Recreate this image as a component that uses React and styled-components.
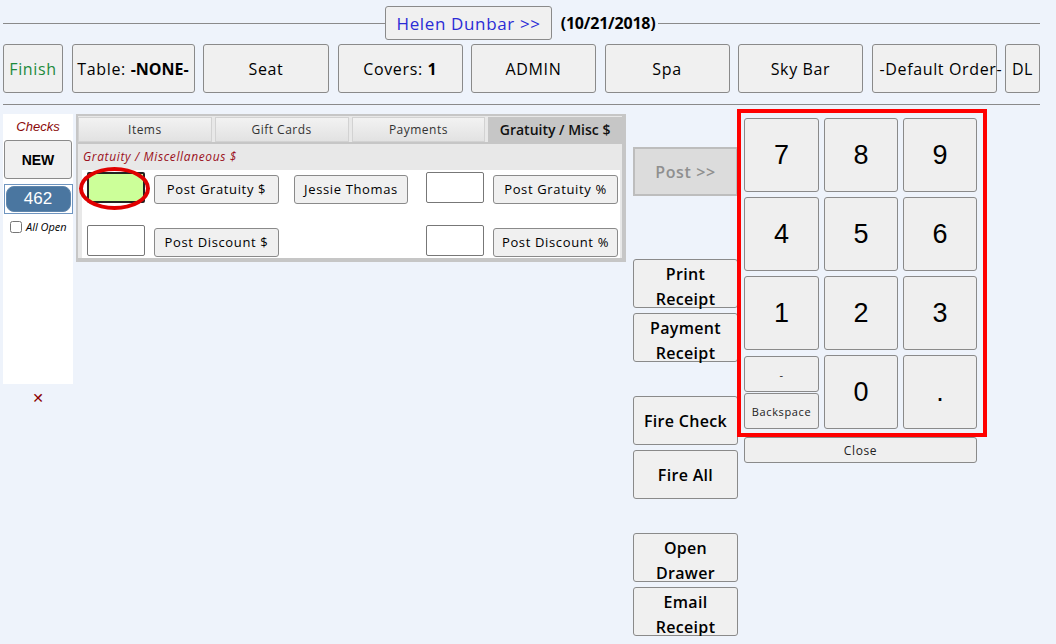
import styled, { createGlobalStyle } from "styled-components";

const Global = createGlobalStyle`
  body {
    margin: 0;
    background: #eef3fb;
    font-family: "Open Sans", "Liberation Sans", sans-serif;
    letter-spacing: 0.04em;
    color: #000;
  }
`;

const topButtons = [
  { key: "admin", label: "ADMIN" },
  { key: "spa", label: "Spa" },
  { key: "sky", label: "Sky Bar" },
  { key: "order", label: "-Default Order-" },
];

const tabs = ["Items", "Gift Cards", "Payments", "Gratuity / Misc $"];

const keys = ["7", "8", "9", "4", "5", "6", "1", "2", "3"];

const App = () => {
  return (
    <>
      <Global />
      <Page>
        <Header>
          <Rule />
          <NameButton>Helen Dunbar &gt;&gt;</NameButton>
          <DateText>(10/21/2018)</DateText>
          <Rule />
        </Header>

        <Toolbar>
          <TopButton $w={60} $color="#1d8a3c">Finish</TopButton>
          <TopButton $w={123}>
            Table: <b>-NONE-</b>
          </TopButton>
          <TopButton $w={126}>Seat</TopButton>
          <TopButton $w={125}>
            Covers: <b>1</b>
          </TopButton>
          {topButtons.map((b) => (
            <TopButton key={b.key} $w={125} $left={b.key === "order"}>
              {b.label}
            </TopButton>
          ))}
          <TopButton $w={35}>DL</TopButton>
        </Toolbar>

        <Divider />

        <Main>
          <ChecksColumn>
            <ChecksPanel>
              <ChecksTitle>Checks</ChecksTitle>
              <NewButton>NEW</NewButton>
              <CheckSlot>
                <CheckButton>462</CheckButton>
              </CheckSlot>
              <AllOpen>
                <input type="checkbox" />
                <span>All Open</span>
              </AllOpen>
            </ChecksPanel>
            <CloseMark>✕</CloseMark>
          </ChecksColumn>

          <TabPanel>
            <TabBar>
              {tabs.map((t, i) => (
                <Tab key={t} $active={i === 3}>
                  {t}
                </Tab>
              ))}
            </TabBar>
            <TabBody>
              <SectionLabel>Gratuity / Miscellaneous $</SectionLabel>
              <FormArea>
                <FormRow>
                  <InputWrap>
                    <AmountInput $highlight />
                    <Ring />
                  </InputWrap>
                  <SmallButton $w={125}>Post Gratuity $</SmallButton>
                  <SmallButton $w={114} $ml={7}>Jessie Thomas</SmallButton>
                  <Spacer />
                  <AmountInput />
                  <SmallButton $w={125}>Post Gratuity %</SmallButton>
                </FormRow>
                <FormRow>
                  <AmountInput />
                  <SmallButton $w={125}>Post Discount $</SmallButton>
                  <Spacer />
                  <AmountInput />
                  <SmallButton $w={125}>Post Discount %</SmallButton>
                </FormRow>
              </FormArea>
            </TabBody>
          </TabPanel>

          <ActionColumn>
            <PostButton>Post &gt;&gt;</PostButton>
            <ActionButton $mt={63}>
              Print
              <br />
              Receipt
            </ActionButton>
            <ActionButton $mt={5}>
              Payment
              <br />
              Receipt
            </ActionButton>
            <ActionButton $mt={34}>Fire Check</ActionButton>
            <ActionButton $mt={5}>Fire All</ActionButton>
            <ActionButton $mt={34}>
              Open
              <br />
              Drawer
            </ActionButton>
            <ActionButton $mt={5}>
              Email
              <br />
              Receipt
            </ActionButton>
          </ActionColumn>

          <Numpad>
            <KeyGrid>
              {keys.map((k) => (
                <Key key={k}>{k}</Key>
              ))}
              <SplitCell>
                <HalfKey>-</HalfKey>
                <HalfKey>Backspace</HalfKey>
              </SplitCell>
              <Key>0</Key>
              <Key>.</Key>
              <Highlight />
            </KeyGrid>
            <CloseButton>Close</CloseButton>
          </Numpad>
        </Main>
      </Page>
    </>
  );
};

const Page = styled.div`
  padding: 6px 16px 0 3px;
`;

const Header = styled.div`
  display: flex;
  align-items: center;
  height: 34px;
`;

const Rule = styled.div`
  flex: 1;
  border-top: 1px solid #8a8a8a;
`;

const NameButton = styled.button`
  height: 34px;
  padding: 0 10px;
  background: #f0f0f0;
  border: 1px solid #8a8a8a;
  border-radius: 3px;
  font-family: inherit;
  letter-spacing: inherit;
  font-size: 17px;
  color: #2b2bd6;
`;

const DateText = styled.span`
  font-weight: 700;
  font-size: 16px;
  margin: 0 2px 0 9px;
  letter-spacing: -0.2px;
`;

const Toolbar = styled.div`
  display: flex;
  justify-content: space-between;
  margin-top: 4px;
`;

const TopButton = styled.button`
  width: ${(p) => p.$w}px;
  height: 49px;
  padding: 0 ${(p) => (p.$left ? "7px" : "3px")};
  background: #f0f0f0;
  border: 1px solid #8a8a8a;
  border-radius: 3px;
  font-family: inherit;
  letter-spacing: inherit;
  font-size: 16px;
  color: ${(p) => p.$color || "#000"};
  white-space: nowrap;
  overflow: visible;
  text-align: ${(p) => (p.$left ? "left" : "center")};
  b {
    font-weight: 700;
    letter-spacing: 0;
  }
`;

const Divider = styled.div`
  border-top: 1px solid #8a8a8a;
  margin-top: 11px;
`;

const Main = styled.div`
  display: flex;
  align-items: flex-start;
  margin-top: 9px;
`;

const ChecksColumn = styled.div`
  width: 70px;
  display: flex;
  flex-direction: column;
  align-items: center;
`;

const ChecksPanel = styled.div`
  width: 70px;
  height: 270px;
  background: #fff;
  display: flex;
  flex-direction: column;
  align-items: center;
  box-sizing: border-box;
  padding-top: 5px;
`;

const ChecksTitle = styled.div`
  font-family: "Liberation Sans", Arial, sans-serif;
  font-style: italic;
  font-size: 13px;
  letter-spacing: 0;
  color: #8b0a0a;
  height: 21px;
`;

const NewButton = styled.button`
  width: 68px;
  height: 39px;
  background: #f0f0f0;
  border: 1px solid #8a8a8a;
  border-radius: 3px;
  font-family: "Liberation Sans", Arial, sans-serif;
  font-weight: 700;
  font-size: 14px;
`;

const CheckSlot = styled.div`
  margin-top: 5px;
  width: 69px;
  height: 30px;
  box-sizing: border-box;
  border: 1px solid #6f95c0;
  padding: 1px;
`;

const CheckButton = styled.button`
  width: 100%;
  height: 100%;
  background: #4a76a0;
  border: 1px solid #5f86ad;
  border-radius: 8px;
  color: #fff;
  font-family: "Liberation Sans", Arial, sans-serif;
  font-size: 17px;
  padding: 0;
`;

const AllOpen = styled.label`
  display: flex;
  align-items: center;
  align-self: flex-start;
  margin: 5px 0 0 7px;
  font-style: italic;
  font-size: 11px;
  letter-spacing: 0;
  input {
    width: 12px;
    height: 12px;
    margin: 0 4px 0 0;
  }
`;

const CloseMark = styled.div`
  margin-top: 6px;
  color: #8b0000;
  font-family: "DejaVu Sans", sans-serif;
  font-size: 14px;
  letter-spacing: 0;
`;

const TabPanel = styled.div`
  width: 550px;
  height: 148px;
  margin-left: 3px;
  box-sizing: border-box;
  background: #e8e8e8;
  border: 2px solid #c6c6c6;
  border-right-width: 4px;
  border-bottom-width: 4px;
  padding-top: 1px;
`;

const TabBar = styled.div`
  display: flex;
  gap: 3px;
  height: 25px;
  border-bottom: 2px solid #c6c6c6;
`;

const Tab = styled.div`
  flex: 1;
  display: flex;
  align-items: center;
  justify-content: center;
  background: ${(p) =>
    p.$active ? "#c6c6c6" : "linear-gradient(#f2f2f2, #e2e2e2)"};
  border: 1px solid ${(p) => (p.$active ? "#c6c6c6" : "#d2d2d2")};
  font-size: ${(p) => (p.$active ? "14px" : "12px")};
  font-weight: ${(p) => (p.$active ? 600 : 400)};
  letter-spacing: ${(p) => (p.$active ? "0" : "0.04em")};
  color: ${(p) => (p.$active ? "#111" : "#333")};
`;

const TabBody = styled.div`
  padding: 4px 0 0 4px;
`;

const SectionLabel = styled.div`
  font-size: 12px;
  font-style: italic;
  color: #9b1020;
  height: 22px;
  padding-left: 1px;
`;

const FormArea = styled.div`
  background: #fff;
  width: 538px;
  height: 88px;
  display: flex;
  flex-direction: column;
  gap: 22px;
  padding: 2px 2px 0 5px;
  box-sizing: border-box;
`;

const FormRow = styled.div`
  display: flex;
  align-items: center;
  gap: 8px;
  height: 31px;
`;

const Spacer = styled.div`
  flex: 1;
`;

const InputWrap = styled.div`
  position: relative;
  display: flex;
`;

const AmountInput = styled.input`
  width: 58px;
  height: 31px;
  box-sizing: border-box;
  border: ${(p) => (p.$highlight ? "2px solid #222" : "1px solid #777")};
  border-radius: 2px;
  background: ${(p) => (p.$highlight ? "#ccff99" : "#fff")};
  margin: 0 1px 0 0;
`;

const Ring = styled.div`
  position: absolute;
  left: -8px;
  top: -5px;
  width: 71px;
  height: 43px;
  box-sizing: border-box;
  border: 4px solid #e00000;
  border-radius: 50%;
  pointer-events: none;
`;

const SmallButton = styled.button`
  width: ${(p) => p.$w}px;
  height: 29px;
  margin-left: ${(p) => p.$ml || 0}px;
  margin-top: 3px;
  background: #f0f0f0;
  border: 1px solid #8a8a8a;
  border-radius: 3px;
  font-family: inherit;
  letter-spacing: inherit;
  font-size: 13px;
  padding: 0;
  white-space: nowrap;
`;

const ActionColumn = styled.div`
  display: flex;
  flex-direction: column;
  width: 105px;
  margin-left: 7px;
  padding-top: 33px;
`;

const PostButton = styled.button`
  height: 49px;
  background: #dcdcdc;
  border: 2px solid #bdbdbd;
  font-family: inherit;
  letter-spacing: inherit;
  font-size: 16px;
  font-weight: 600;
  color: #8f8f8f;
`;

const ActionButton = styled.button`
  height: 49px;
  margin-top: ${(p) => p.$mt}px;
  background: #f0f0f0;
  border: 1px solid #8a8a8a;
  border-radius: 3px;
  font-family: inherit;
  letter-spacing: 0.02em;
  font-size: 16px;
  font-weight: 600;
  line-height: 25px;
  padding: 2px 0 0;
  color: #000;
`;

const Numpad = styled.div`
  width: 233px;
  margin: 4px 0 0 6px;
  display: flex;
  flex-direction: column;
`;

const KeyGrid = styled.div`
  position: relative;
  display: grid;
  grid-template-columns: 75px 74px 74px;
  grid-auto-rows: 74px;
  gap: 5px;
`;

const Key = styled.button`
  background: #efefef;
  border: 1px solid #8a8a8a;
  border-radius: 3px;
  font-family: "Liberation Sans", Arial, sans-serif;
  font-size: 27px;
  padding: 0;
  color: #000;
`;

const SplitCell = styled.div`
  display: flex;
  flex-direction: column;
  gap: 1px;
  margin-top: 1px;
`;

const HalfKey = styled.button`
  flex: 1;
  background: #efefef;
  border: 1px solid #8a8a8a;
  border-radius: 3px;
  font-family: inherit;
  letter-spacing: inherit;
  font-size: 11px;
  padding: 0;
  color: #222;
`;

const Highlight = styled.div`
  position: absolute;
  left: -7px;
  top: -9px;
  width: 250px;
  height: 328px;
  box-sizing: border-box;
  border: 4px solid #ff0000;
  pointer-events: none;
`;

const CloseButton = styled.button`
  margin-top: 8px;
  height: 26px;
  background: #efefef;
  border: 1px solid #8a8a8a;
  border-radius: 3px;
  font-family: inherit;
  letter-spacing: inherit;
  font-size: 12px;
  color: #222;
`;

export default App;
